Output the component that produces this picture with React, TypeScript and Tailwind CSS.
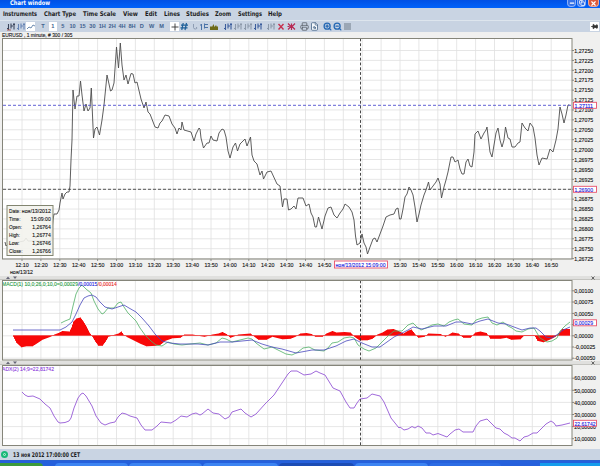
import type { ReactNode } from 'react';
import { Minus, Copy, X, Printer, FileSearch, ZoomIn, ZoomOut, Pin } from 'lucide-react';

const MENU = [
  { label: 'Instruments', w: 34, gap: 'ml-[3px]' },
  { label: 'Chart Type', w: 32, gap: 'ml-[7px]' },
  { label: 'Time Scale', w: 33, gap: 'ml-[7px]' },
  { label: 'View', w: 15, gap: 'ml-[7px]' },
  { label: 'Edit', w: 12, gap: 'ml-[7px]' },
  { label: 'Lines', w: 16, gap: 'ml-[7px]' },
  { label: 'Studies', w: 23, gap: 'ml-[6px]' },
  { label: 'Zoom', w: 16, gap: 'ml-[6px]' },
  { label: 'Settings', w: 24, gap: 'ml-[7px]' },
  { label: 'Help', w: 14, gap: 'ml-[6px]' },
];

const PERIODS = ['T', '1', '5', '10', '15', '30', '1H', '2H', '4H', '8H', 'D', 'W', 'M'];

const TIMES = Array.from({ length: 29 }, (_, i) => {
  const m = 12 * 60 + 10 + i * 10;
  return { x: 22 + i * 18.9, label: `${Math.floor(m / 60)}:${String(m % 60).padStart(2, '0')}` };
});

const PRICES = Array.from({ length: 22 }, (_, i) => ({
  y: 50.5 + i * 9.91,
  label: `1,${27250 - i * 25}`,
}));

const MACD_LEVELS = [
  { y: 290.8, label: '0,00100' },
  { y: 302, label: '0,00075' },
  { y: 313.4, label: '0,00050' },
  { y: 324.6, label: '0,00025' },
  { y: 335.8, label: '0,00000' },
  { y: 347, label: '-0,00025' },
  { y: 358.2, label: '-0,00050' },
];

const ADX_LEVELS = [60, 50, 40, 30, 20, 10].map((v, i) => ({ y: 378.2 + i * 12.1, label: `${v},00000` }));

const PRICE_LINE =
  '5,242 6,246 8,244 24,241 26,238 28,241 51,241 53,220 54,214 57,214 59,210 60,203 62,193 63,199 65,194 67,192 69,192 70,186 71,160 72,140 73,90 74,100 75,109 77,96 79,96 80.5,81 82,95 84,111 86,104 88,111 90,108 91.3,88 93.5,138 95,129 97,127 99.5,135 102,120 104,105 105,95 107,75 109,84 110.5,91 112,90 114,83 116.5,47 118.5,68 120.3,43 122,65 124,80 126,75 128,84 131,73.5 133,74 135,83 137,82 141,99 144,108 146,102 148,112 150,114 155,127 158,128 160,123 162,121 165,115 169,116 172,124 175,128 177,134 179,128 181,130 182,122 184,130 191,132 194,141 196,134 199,128 ' +
  '200,129 201,138 203.5,148 207,143 209,143 211,136 213,140 217,141 219,133 222,129 224,130 226,137 228,151 230,158 233,147 235.5,143 237.5,151 240,144 245,139 247,146 250.5,137 252,155 254,161 257,164 260,175 262,171 263.5,179 267,172 271,171 277,184 280,186 282.5,207 284,199 287,199 288.5,210 291,209 294,206 296,209 298,198 303,198 306,206 309,204 311,213 313,217 315,227 316.5,227 318.5,217 322,229 325,216 328,208 331,207 334,215 337,218 340,213 343,209 345,204 349,207 352,212 354,220 355.5,236 357,245 360,243 362,234 364,243 366,247 367.5,254 370,247 373,239 375,238 377,242 380,234 383,226 386,217 390,215 394,214 396,209 398,208 ' +
  '399.5,219 401,219 403,209 405,197 407,194 409,187 411,190 413,195 415,207 417,222 419,214 421,205 424,195 426,190 428.5,182 430,190 433,186 436,182 438,178 440,184 441.5,198 444,187 446,180 448,172 451,157 453,157 455,162 458,160 460,169 462,174 464,174 466,162 468,159 470,166 472,167 474,152 475,134 478,131 481,139 484,133 486,130 487,127 488.5,140 490,152 492,157 494,145 496,133 498,128 500,140 502,147 504,140 505.5,127 508,138 510,139 512,147 515,147 518,143 520,142 522,123 525,128 528,131 530,123 533,127 535,138 537,155 539,165 542,158 547,159 550,149 553,152 556,140 558,129 560,107 562,114 564,123 566,115 568,105 569.5,105';

const MACD_GREEN =
  '61,323 65,321 70,319 73,306 76,294 79,288 82,285 86,289 91,293 94,301 98,309 102,314 104,313 108,308 114,308 118,303 121,302 124,307 128,313 132,317 136,321 140,328 145,335 151,341 156,345 162,346 168,342 174,344 182,345 190,344 200,343 208,345 216,343 222,338 226,339 232,342 240,340 248,338 252,339 256,343 264,349 272,347 280,351 286,354 292,355 298,352 303,348 309,347 315,350 324,351 328,348 332,343 338,342 344,338 350,337 354,338 358,345 364,349 369,351 376,348 382,342 388,336 394,331 400,331 402,331 408,325 413,323 417,327 421,330 426,328 432,325 438,324 444,326 449,322 454,320 458,319 464,324 472,325 476,320 482,318 488,317 492,323 497,325 503,322 508,326 512,328 516,331 522,332 528,329 534,328 537,333 540,338 547,342 552,341 557,338 560,331 565,326 570,322';

const MACD_BLUE =
  '13,330 60,330 66,327 72,322 76,314 80,305 84,298 88,296 92,295 96,297 100,302 105,307 112,309 118,307 124,305 129,308 136,312 142,318 149,326 155,334 162,341 170,343 180,344 198,344 208,345 220,342 232,342 252,340 262,344 272,347 282,349 296,353 312,350 324,350 336,346 346,341 354,339 362,343 372,347 380,347 387,342 394,337 400,334 408,330 413,327 422,329 434,326 446,326 456,322 462,322 472,324 480,321 488,319 498,323 506,324 514,327 522,330 530,328 536,328 540,331 546,337 552,338 558,334 563,330 570,327';

const ADX_LINE =
  '22,392 25,395 28,396.5 33,396 40,399 45,404 50,408 54,416 58,422 60,423 65,422.5 69,421 71,418 74,408 78,398 81,394 83,393 86,396 92,406 96,416 101,423 105,425 110,423 115,422 118,417 122,413 126,414 130,416 137,418 141,425 145,430 152,430 157,426 161,422 171,423 176,420 181,416 187,417 192,414 196,413 200,415 202,414 208,409 213,413 219,414 225,419 229,417 232,412 241,409 245,413 251,417 256,414 265,404 274,395 282,383 288,374 291,371 297,371 304,375 311,374 316,371 320,373 325,375 333,388 340,391 346,402 350,408 354,408 357,403 360,399 367,398 372,394 380,396 384,402 391,418 399,428 ' +
  '400,427 404,430 408,429 412,426.5 415,428 418,426 422,428 426,433 430,433 433,435 438,433.5 447,437 450,434 455,430 459,429 463,432 473,432 476,426 480,421 487,419 491,423 496,428 500,429 504,433 508,435 512,438 515,438 520,441 524,437 528,436 533,433 537,433 542,428 546,424 551,421 554,423 556,426 562,425 566,424 570,423';

// [x, height] pairs, linearly interpolated into bars
const HIST: [number, number][] = [
  [13, -1], [16, -7], [21, -11.5], [26, -10.5], [32, -10.5], [36, -8], [42, -4], [50, -1], [54, 1], [58, 2.5], [62, 4.5], [69, 4],
  [71, 8], [73, 14], [76, 17], [80, 18], [83, 14], [86, 9], [89, 3], [92, -1], [95, -6], [98, -10], [102, -10], [105, -6], [108, -1],
  [113, 0.5], [118, 2], [121, 4], [123, 1], [127, -1.5], [133, -4.5], [140, -8], [146, -10.5], [155, -10], [160, -9], [165, -5],
  [172, -2.5], [180, -2], [184, 1], [192, 1], [204, -1], [212, 1], [218, 2], [222, 3.5], [226, 1.5], [230, -2], [238, 1], [250, 2],
  [254, -1], [258, -4], [266, -4], [272, -1], [278, -2.5], [282, -3.5], [290, -3], [295, -1], [300, 2], [306, 2.5], [311, 1.5],
  [315, -1], [322, -1], [326, 2], [332, 4.5], [336, 3], [344, 3.5], [350, 3], [354, -1], [359, -4.5], [367, -4.5], [372, -3],
  [377, 1], [382, 3], [387, 6], [393, 6.5], [398, 4.5], [403, 2], [408, 5], [411, 6], [415, 1], [418, -2], [424, -1], [428, 2],
  [440, 1.5], [445, -1], [452, 3], [458, 2], [463, -2], [470, -2], [475, 3], [480, 4], [486, 2.5], [490, -3], [500, -3], [506, -2],
  [511, -4], [520, -3.5], [524, 0.5], [534, 0.5], [537, -5], [543, -6.5], [549, -4], [555, -1], [558, 2], [562, 6.5], [570, 6.5],
];

function histAt(x: number) {
  const i = HIST.findIndex(([hx]) => hx >= x);
  if (i <= 0) return HIST[0][1];
  const [x0, v0] = HIST[i - 1];
  const [x1, v1] = HIST[i];
  return v0 + ((x - x0) / (x1 - x0)) * (v1 - v0);
}

const BARS = Array.from({ length: 557 }, (_, i) => ({ x: 13 + i, h: histAt(13 + i) }));

function Label({ x, y, w, color = '#151515', size = 6, children }: {
  x: number; y: number; w: number; color?: string; size?: number; children: ReactNode;
}) {
  return (
    <text x={x} y={y + 2.2} fontSize={size} fill={color} stroke={color} strokeWidth=".12" textLength={w} lengthAdjust="spacingAndGlyphs">{children}</text>
  );
}

function BoldText({ w, color = '#1c1c22', className, children }: {
  w: number; color?: string; className: string; children: string;
}) {
  return (
    <svg width={w} height="10" className={`shrink-0 overflow-visible ${className}`}>
      <text y="7.2" fontSize="6.4" fontWeight="bold" fill={color} textLength={w} lengthAdjust="spacingAndGlyphs"
        className="font-['DejaVu_Sans',sans-serif]">{children}</text>
    </svg>
  );
}

function PriceTag({ y, w, children }: { y: number; w: number; children: string }) {
  return (
    <g>
      <rect x="573.5" y={y - 3} width="23" height="6" fill="#fff" stroke="#e8506a" strokeWidth="0.9" />
      <Label x={574.5} y={y} w={w} color="#2020e0">{children}</Label>
    </g>
  );
}

function Panel({ top, height, plotTop, plotBottom, levels, labelWidth, hide, children }: {
  top: number; height: number; plotTop: number; plotBottom: number;
  levels: { y: number; label: string }[]; labelWidth: number; hide?: string; children: ReactNode;
}) {
  return (
    <svg width="600" height={height} viewBox={`0 ${top} 600 ${height}`} className="block shrink-0">
      <rect x="2.5" y={plotTop} width="569.5" height={plotBottom - plotTop} fill="#fff" />
      {TIMES.map((t) => <line key={t.label} x1={t.x} x2={t.x} y1={plotTop} y2={plotBottom} stroke="#dfdfdf" strokeWidth="0.8" />)}
      {levels.map((l) => (
        <g key={l.label}>
          {l.y < plotBottom && <line x1="3" x2="572" y1={l.y} y2={l.y} stroke="#dfdfdf" strokeWidth="0.8" />}
          <line x1="572" x2="574" y1={l.y} y2={l.y} stroke="#555" strokeWidth="0.7" />
          {l.label !== hide && (
            <Label x={574.3} y={l.y} w={l.label.startsWith('-') ? labelWidth + 2 : labelWidth}>{l.label}</Label>
          )}
        </g>
      ))}
      {children}
      <line x1="360.5" x2="360.5" y1={plotTop} y2={plotBottom} stroke="#333" strokeWidth="0.9" strokeDasharray="2.8 2" />
      <rect x="2.5" y={plotTop} width="569.5" height={plotBottom - plotTop} fill="none" stroke="#85857a" />
    </svg>
  );
}

function Splitter() {
  return (
    <div className="flex h-1 shrink-0 items-center justify-between border-b border-[#c4c4c0] bg-[#e0e0de] pl-[6px] pr-[5px]">
      <svg width="12" height="4" viewBox="0 0 12 4">
        <path d="M0 3 L2 .5 L4 3Z M7 .5 h4 l-2 2.5Z" fill="#667" />
      </svg>
      <svg width="4" height="4" viewBox="0 0 4 4"><path d="M.5 .5l3 3M3.5 .5l-3 3" stroke="#666" /></svg>
    </div>
  );
}

function Bars({ color, mark }: { color: string; mark?: string }) {
  return (
    <svg width="10" height="9" viewBox="0 0 10 9" className="shrink-0" fill="none" stroke={color}>
      <path d="M2.5 2v6M1 6.5h2M5 1.5v5M5 4h2M8 1v6.5M7 2.5h2" strokeWidth="1.1" />
      {mark && <path d="M1 8h4" stroke={mark} />}
    </svg>
  );
}

function Toolbar() {
  return (
    <div className="flex h-[12px] shrink-0 items-center border-t border-[#dde5ed] bg-[#c8d3e2] pl-[6px] pr-[1px]">
      <Bars color="#3c465c" mark="#b05a50" />
      <Bars color="#6684b4" />
      <span className="flex h-[9px] w-[9px] items-center justify-center bg-white">
        <svg width="8" height="6" viewBox="0 0 8 6" fill="none" stroke="#6b8ab0"><path d="M0 5l2-2 2 1 2-3 2 1" /></svg>
      </span>
      <div className="ml-[3px] flex">
        {PERIODS.map((p) => (
          <span key={p} className="flex w-[9.9px] justify-center">
            <span className={`flex h-[9px] items-center justify-center px-px text-[5.6px] font-bold text-[#40618f] ${p === '1' ? 'w-[8px] bg-white' : ''}`}>
              {p}
            </span>
          </span>
        ))}
      </div>
      <span className="ml-[3.5px] flex h-[9px] w-[9px] items-center justify-center bg-white">
        <svg width="8" height="8" viewBox="0 0 8 8" stroke="#333" strokeWidth=".9"><path d="M4 .5v7M.5 4h7" /></svg>
      </span>
      <svg width="10" height="9" viewBox="0 0 10 9" fill="none" stroke="#1d5f98" strokeWidth="1.2">
        <path d="M4.2 1l-1.4 7M7.5 1L6 8M2 3.2h7M1.5 5.8h7" />
      </svg>
      <svg width="10" height="9" viewBox="0 0 10 9" fill="none" stroke="#8d9cb2"><path d="M4.5 2v3.5q0 1.5 2 1.5t1-2" /></svg>
      <svg width="10" height="9" viewBox="0 0 10 9" fill="none" stroke="#4a73a8"><path d="M2.5 2v6M1 3h2M5.5 1.5v5M5 5.5h4M6 2.5h3" /></svg>
      <svg width="10" height="9" viewBox="0 0 10 9" fill="#6e6b18"><path d="M1 8V5l1-1 1 1 1.5-3 1 3L7 3l1 2 1-1v4Z" /></svg>
      <div className="ml-[3.5px] flex">
        <Bars color="#3a5c9c" />
        <Bars color="#8c99aa" />
        <Bars color="#8c99aa" />
        <Bars color="#3a5c9c" />
      </div>
      <div className="ml-[3px] flex">
        <Bars color="#8c99aa" />
        <svg width="10" height="9" viewBox="0 0 10 9" stroke="#c6304e" strokeWidth="1.4"><path d="M2.5 2l5 5.5M7.5 2l-5 5.5" /></svg>
        <svg width="10" height="9" viewBox="0 0 10 9" fill="none" stroke="#b72a54" strokeWidth="1.2"><path d="M2 1.5l3 3-3 3M5.5 1.5v6.5M9 1.5l-3 3 3 3M1.5 4.5h2" /></svg>
      </div>
      <div className="ml-[4px] flex gap-[1px]">
        <Printer size={9} color="#555d66" strokeWidth={2} />
        <FileSearch size={9} color="#3c5c80" fill="#f4f8fb" strokeWidth={2} />
      </div>
      <div className="ml-[4px] flex items-center gap-[1px]">
        <ZoomIn size={9} color="#2468b4" strokeWidth={3.5} />
        <ZoomOut size={9} color="#2468b4" strokeWidth={3.5} />
        <span className="ml-[1px] h-[7px] w-[7px] bg-[#9ba7b5]" />
      </div>
      <span className="ml-auto flex h-[9px] w-[9px] items-center justify-center bg-white">
        <Pin size={7} color="#333" fill="#333" className="rotate-90" strokeWidth={3} />
      </span>
    </div>
  );
}

const INFO = [
  ['Date:', 'ноя/13/2012', 29, 11.5],
  ['Time:', '15:09:00', 20, 11.5],
  ['Open:', '1,26764', 18.5, 13],
  ['High:', '1,26774', 18.5, 11],
  ['Low:', '1,26746', 18.5, 10.5],
  ['Close:', '1,26766', 18.5, 13.5],
] as const;

export default function App() {
  return (
    <div className="flex h-[466px] w-[600px] flex-col overflow-hidden bg-[#f0f0ef] font-['Liberation_Sans',Arial,sans-serif]">
      <div className="flex h-[8px] shrink-0 justify-between bg-gradient-to-b from-[#0050e4] to-[#0062fa]">
        <BoldText w={40} color="#fff" className="ml-[10px] -mt-[2px]">Chart window</BoldText>
        <div className="flex gap-[1px]">
          <span className="flex h-[7px] w-[9px] items-end justify-center rounded-b-sm border-x border-b border-[#8bb0f7] bg-[#3672e8]">
            <Minus size={6} color="#fff" strokeWidth={5} />
          </span>
          <span className="flex h-[7px] w-[9px] items-center justify-center rounded-b-sm border-x border-b border-[#8bb0f7] bg-[#3672e8]">
            <Copy size={6} color="#fff" strokeWidth={3} />
          </span>
          <span className="ml-[1px] mr-[1px] flex h-[7px] w-[11px] items-center justify-center rounded-b-sm border-x border-b border-[#e8a89a] bg-[#dc5a3c]">
            <X size={7} color="#fff" strokeWidth={4} />
          </span>
        </div>
      </div>

      <div className="flex h-[12px] shrink-0 items-center bg-[#c9d4e3]">
        {MENU.map((m) => (
          <BoldText key={m.label} w={m.w} className={m.gap}>{m.label}</BoldText>
        ))}
      </div>

      <Toolbar />

      <Panel top={32} height={244} plotTop={38.5} plotBottom={259} levels={PRICES} labelWidth={19} hide="1,26900">
        <Label x={2} y={35} w={70.5}>EURUSD , 1 minute, # 300 / 305</Label>
        <polyline points={PRICE_LINE} fill="none" stroke="#4c4c4c" strokeWidth="0.9" />
        <line x1="3" x2="572" y1="105.3" y2="105.3" stroke="#5050d0" strokeWidth="0.9" strokeDasharray="3 2" />
        <line x1="3" x2="572" y1="189.3" y2="189.3" stroke="#444" strokeWidth="0.9" strokeDasharray="3 2" />
        <rect x="7" y="205.5" width="46" height="50" fill="#f3f3ed" fillOpacity=".9" stroke="#828570" />
        {INFO.map(([k, v, w, kw], i) => (
          <g key={k}>
            <Label x={9} y={210.5 + i * 8} w={kw}>{k}</Label>
            <Label x={50.8 - w} y={210.5 + i * 8} w={w}>{v}</Label>
          </g>
        ))}
        {TIMES.filter((t) => !['15:00', '15:10', '15:20'].includes(t.label)).map((t) => (
          <g key={t.label}>
            <line x1={t.x} x2={t.x} y1="259" y2="261" stroke="#666" strokeWidth=".7" />
            <Label x={t.x - 6.6} y={264.6} w={13.4}>{t.label}</Label>
          </g>
        ))}
        <Label x={10} y={271.5} w={23}>ноя/13/12</Label>
        <rect x="334.5" y="261" width="53" height="7" fill="#fff" stroke="#e8506a" strokeWidth=".9" />
        <Label x={335.5} y={264.6} w={50} color="#2020e0">ноя/13/2012 15:09:00</Label>
        <PriceTag y={105.3} w={18.5}>1,27111</PriceTag>
        <PriceTag y={189.3} w={18.5}>1,26900</PriceTag>
      </Panel>

      <Splitter />

      <Panel top={280} height={81} plotTop={280.5} plotBottom={360} levels={MACD_LEVELS} labelWidth={19} hide="0,00025">
        {BARS.map((b) => (
          <rect key={b.x} x={b.x} y={b.h > 0 ? 335.5 - b.h : 335.8} width="1" height={Math.abs(b.h)} fill="#f80808" />
        ))}
        <line x1="13" x2="570" y1="335.5" y2="335.5" stroke="#f04848" strokeWidth=".9" />
        <polyline points={MACD_GREEN} fill="none" stroke="#50b066" strokeWidth=".8" />
        <polyline points={MACD_BLUE} fill="none" stroke="#4848bc" strokeWidth=".8" />
        <Label x={2} y={283.8} w={76} color="#279a44">MACD(1) 10,0;26,0;10,0=0,00029</Label>
        <Label x={78.2} y={283.8} w={19} color="#2424dc">/0,00015</Label>
        <Label x={97.6} y={283.8} w={19} color="#e82828">/0,00014</Label>
        <PriceTag y={322.8} w={18.5}>0,00029</PriceTag>
      </Panel>

      <Splitter />

      <Panel top={365} height={84} plotTop={365.5} plotBottom={445.5} levels={ADX_LEVELS} labelWidth={21.5}>
        <polyline points={ADX_LINE} fill="none" stroke="#9b62d8" strokeWidth=".95" />
        <Label x={2} y={368.6} w={52} color="#8c3cdc">ADX(2) 14;9=22,81742</Label>
        <PriceTag y={423.3} w={21}>22,61742</PriceTag>
      </Panel>

      <div className="flex h-[11px] shrink-0 items-center bg-[#c9d4e3] pl-[1px]">
        <span className="flex h-[7px] w-[7px] items-center justify-center rounded-full bg-[#18b878]">
          <span className="h-[3px] w-[3px] rounded-full border border-[#c4f4dc]" />
        </span>
        <BoldText w={67} className="ml-[5px]">13 ноя 2012 17:00:00 CET</BoldText>
      </div>

      <div className="flex h-[7px] shrink-0 gap-px border-t border-[#2a62d0] bg-[#2560dc] pt-[2px]">
        <span className="w-[43px] rounded-tr bg-[#3c9a3c]" />
        <span className="ml-[11px] w-[73px] rounded-t-sm bg-[#3c84f2]" />
        <span className="w-[73px] rounded-t-sm bg-[#3c84f2]" />
        <span className="w-[75px] rounded-t-sm bg-[#3c84f2]" />
        <span className="w-[75px] rounded-t-sm bg-[#1c4cb4]" />
        <span className="w-[73px] rounded-t-sm bg-[#3c84f2]" />
        <span className="w-[72px] rounded-t-sm bg-[#2c6ce4]" />
        <span className="ml-auto w-[60px] bg-[#149cec]" />
      </div>
    </div>
  );
}
